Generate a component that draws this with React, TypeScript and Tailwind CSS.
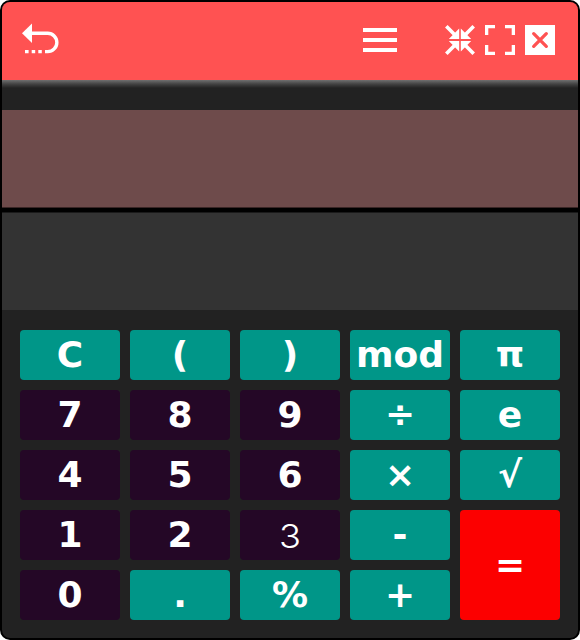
import React from "react";

type Kind = "op" | "num" | "eq";
type Key = { label: string; kind: Kind; thin?: boolean };

const keys: Key[] = [
  { label: "C", kind: "op" },
  { label: "(", kind: "op" },
  { label: ")", kind: "op" },
  { label: "mod", kind: "op" },
  { label: "π", kind: "op" },
  { label: "7", kind: "num" },
  { label: "8", kind: "num" },
  { label: "9", kind: "num" },
  { label: "÷", kind: "op" },
  { label: "e", kind: "op" },
  { label: "4", kind: "num" },
  { label: "5", kind: "num" },
  { label: "6", kind: "num" },
  { label: "×", kind: "op" },
  { label: "√", kind: "op" },
  { label: "1", kind: "num" },
  { label: "2", kind: "num" },
  { label: "3", kind: "num", thin: true },
  { label: "-", kind: "op" },
  { label: "=", kind: "eq" },
  { label: "0", kind: "num" },
  { label: ".", kind: "op" },
  { label: "%", kind: "op" },
  { label: "+", kind: "op" },
];

const tone: Record<Kind, string> = {
  op: "bg-[#009688]",
  num: "bg-[#240726]",
  eq: "bg-[#fc0000] row-span-2",
};

function CalcKey({ label, kind, thin }: Key) {
  return (
    <button
      className={`flex items-center justify-center rounded-[4px] text-white leading-[50px] ${tone[kind]} ${
        thin
          ? "font-['Inter',sans-serif] font-light text-[33px]"
          : "font-['DejaVu_Sans',sans-serif] font-bold text-[36px]"
      }`}
    >
      {thin ? <span className="mt-0.5 mr-px inline-block scale-x-[1.1]">{label}</span> : label}
    </button>
  );
}

function Header() {
  return (
    <header className="flex h-[78px] shrink-0 items-center bg-[#ff5252] pb-0.5 pl-5 pr-[23px] text-white">
      <svg width="37" height="34" viewBox="0 0 37 34" fill="none">
        <path d="M0 10.300 10 0.600V20Z" fill="currentColor" />
        <path d="M9 10.300H25.700A9.150 9.150 0 0 1 25.700 28.600H23" stroke="currentColor" strokeWidth="3.400" />
        <path d="M3 27h3.600v3.300H3zM9.700 27h3.500v3.300H9.700zM16.300 27h3.500v3.300H16.300z" fill="currentColor" />
      </svg>
      <svg className="ml-auto" width="34" height="24" viewBox="0 0 34 24">
        <path d="M0 .1h34v3.800H0zM0 10.100h34v3.800H0zM0 20.100h34v3.800H0z" fill="currentColor" />
      </svg>
      <svg className="ml-12" width="30" height="30" viewBox="0 0 30 30">
        <g stroke="currentColor" strokeWidth="3.600">
          <path d="M1.300 1.300 11 11M28.700 1.300 19 11M1.300 28.700 11 19M28.700 28.700 19 19" />
        </g>
        <path d="M14.200 3.500V13.900H3.800zM15.800 3.500V13.900H26.200zM14.200 26.500V16.100H3.800zM15.800 26.500V16.100H26.200z" fill="currentColor" />
      </svg>
      <svg className="ml-2.5" width="30" height="30" viewBox="0 0 30 30" fill="none">
        <path d="M1.650 10V1.650H10M20 1.650h8.350V10M28.350 20v8.350H20M10 28.350H1.650V20" stroke="currentColor" strokeWidth="3.300" />
      </svg>
      <svg className="ml-2.5" width="30" height="30" viewBox="0 0 30 30" fill="none">
        <path d="M0 0h30v30H0z" fill="currentColor" />
        <path d="m8.700 8.700 12.600 12.600M21.300 8.700 8.700 21.300" stroke="#ff5252" strokeWidth="3.300" strokeLinecap="round" />
      </svg>
    </header>
  );
}

export default function App() {
  return (
    <div className="h-[640px] w-[580px] bg-white">
      <main className="flex h-full flex-col overflow-hidden rounded-[10px] border-2 border-black bg-[#222222]">
        <Header />
        <div className="h-2 shrink-0 bg-linear-to-b from-[#707070] via-[#434343] to-[#222222]" />
        <div className="h-[22px] shrink-0" />
        <div className="h-[98px] shrink-0 border-b border-[#3a2626] bg-[#6e4b4b]" />
        <div className="h-1 shrink-0 bg-black" />
        <div className="h-[98px] shrink-0 border-t border-[#1a1a1a] bg-[#333333]" />
        <div className="grid grid-cols-[repeat(5,100px)] grid-rows-[repeat(5,50px)] gap-2.5 px-[18px] pt-5">
          {keys.map((k) => (
            <CalcKey key={k.label} {...k} />
          ))}
        </div>
      </main>
    </div>
  );
}
